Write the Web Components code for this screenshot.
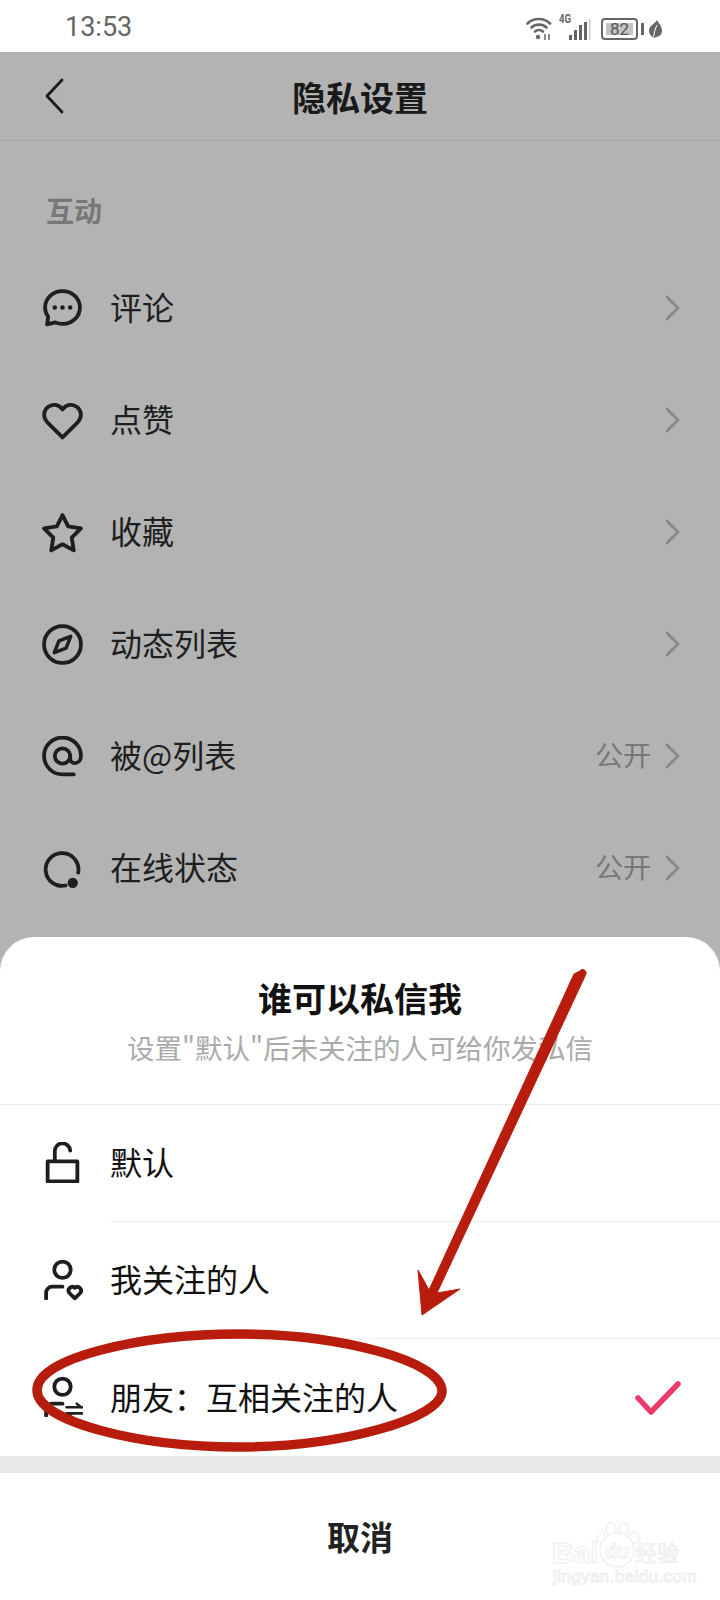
<!DOCTYPE html>
<html lang="zh">
<head>
<meta charset="utf-8">
<title>隐私设置</title>
<style>
html,body{margin:0;padding:0;}
body{width:720px;height:1600px;position:relative;overflow:hidden;background:#b3b3b3;font-family:"Noto Sans CJK SC","Noto Sans",sans-serif;}
svg.ic{width:41px;height:41px;fill:none;stroke:#1e1e1e;stroke-width:3.700;stroke-linecap:round;stroke-linejoin:round;display:block;}
svg.ic .solid{fill:#1e1e1e;stroke:none;}
</style>
</head>
<body>
<status-bar></status-bar>
<nav-bar>隐私设置</nav-bar>
<section-label>互动</section-label>

<setting-row>
  <svg slot="icon" class="ic" viewBox="0 0 40 40"><path d="M20 3C10.500 3 3 10 3 19c0 3.500 1.200 6.500 3 9l-1 7.500 8-2c2.500 1.200 4.500 1.500 7 1.500 9.500 0 17-7 17-16S29.500 3 20 3z"/><circle class="solid" cx="12.500" cy="19" r="2.200"/><circle class="solid" cx="20" cy="19" r="2.200"/><circle class="solid" cx="27.500" cy="19" r="2.200"/></svg>
  评论
</setting-row>
<setting-row>
  <svg slot="icon" class="ic" viewBox="0 0 40 40"><path d="M20 36.500 5 21.500C.8 17 1.300 10.300 5.800 6.800 10.300 3.300 16.500 4.300 20 9.300c3.500-5 9.700-6 14.200-2.500 4.500 3.500 5 10.200.8 14.700z"/></svg>
  点赞
</setting-row>
<setting-row>
  <svg slot="icon" class="ic" viewBox="0 0 40 40"><path d="M20 3l5.500 11 12.500 2-9 9 2 12.500-11-6-11 6 2-12.500-9-9 12.500-2z"/></svg>
  收藏
</setting-row>
<setting-row>
  <svg slot="icon" class="ic" viewBox="0 0 40 40"><circle cx="20" cy="20" r="18"/><path d="M28 12 23.500 23.500 12 28 16.500 16.500z" stroke-width="3.400"/></svg>
  动态列表
</setting-row>
<setting-row value="公开">
  <svg slot="icon" class="ic" viewBox="0 0 40 40"><path d="M31 37.500H20a18 18 0 1 1 18-18c0 4.500-3 7-6 7s-4.500-2.500-4.500-5V19"/><circle cx="20" cy="19.500" r="7.500"/></svg>
  被@列表
</setting-row>
<setting-row value="公开">
  <svg slot="icon" class="ic" viewBox="0 0 40 40"><path d="M23 36.600A16 16 0 1 1 35.300 24"/><circle class="solid" cx="30" cy="34" r="5"/></svg>
  在线状态
</setting-row>

<bottom-sheet heading="谁可以私信我" sub='设置"默认"后未关注的人可给你发私信' cancel="取消">
  <sheet-option>
    <svg slot="icon" class="ic" viewBox="0 0 40 40"><path d="M5.500 19h29v19.500h-29z"/><path d="M12.500 18V9.500a7.500 7.500 0 0 1 15-1.200"/></svg>
    默认
  </sheet-option>
  <sheet-option>
    <svg slot="icon" class="ic" viewBox="0 0 40 40"><circle cx="20" cy="10.500" r="8"/><path d="M4 38.500V33a6 6 0 0 1 6-6h10"/><path d="M32 38.500l-5.300-5.300a3.700 3.700 0 0 1 5.300-5.100 3.700 3.700 0 0 1 5.300 5.100z"/></svg>
    我关注的人
  </sheet-option>
  <sheet-option checked>
    <svg slot="icon" class="ic" viewBox="0 0 40 40"><circle cx="20" cy="10.500" r="8"/><path d="M4 38.500V33a6 6 0 0 1 6-6h10"/><path d="M24 30.500h15M34 27l4 3.500M24 36.500h15M29 40l-4-3.500" stroke-width="2.600"/></svg>
    朋友：互相关注的人
  </sheet-option>
</bottom-sheet>

<red-marks></red-marks>
<baidu-mark></baidu-mark>

<script>
class StatusBar extends HTMLElement{
    constructor(){
        super()
        this.attachShadow({mode:'open'}).innerHTML=`
        <style>
        :host{display:flex;height:52px;background:#fff;align-items:center;justify-content:space-between;padding:0 58px 0 65px;box-sizing:border-box;color:#666;font-family:"Roboto","Noto Sans",sans-serif;}
        .time{font-size:27px;line-height:1;margin-top:3px;}
        .icons{display:flex;align-items:flex-end;position:relative;top:2px;}
        svg{display:block;}
        .g4{font-size:12px;font-weight:700;align-self:flex-start;margin:-3px -4px 0 7px;line-height:12px;width:14px;transform:scaleX(.8);transform-origin:left;}
        .batt{width:37px;height:22px;box-sizing:border-box;border:2px solid #666;border-radius:4px;margin-left:10px;padding:3px;display:flex;}
        .batt span{flex:1;background:#c4c4c4;font-size:17px;line-height:12px;text-align:center;color:#555;}
        .tip{margin:0 0 5px 3px;}
        .leaf{margin:0 0 2px 5px;}
        </style>
        <div class="time">13:53</div>
        <div class="icons">
            <svg width="26" height="24" viewBox="0 0 26 24" fill="none" stroke="#666" stroke-width="2.600" stroke-linecap="round"><path d="M1.500 7.500C7.500 1.500 18 1.500 24 7.500"/><path d="M5.500 11.500c4-3.800 11-3.800 15 0"/><path d="M9 15.500c2.200-1.800 5.800-1.800 8 0"/><circle cx="12" cy="21" r="2.200" fill="#666" stroke="none"/><path d="M19 18.500v5M23 18.500v5" stroke-width="1.500"/></svg>
            <div class="g4">4G</div>
            <svg width="22" height="21" viewBox="0 0 22 21" fill="#666"><rect x="0" y="16" width="3" height="5"/><rect x="5" y="11" width="3" height="10"/><rect x="10" y="6" width="3" height="15"/><rect x="15" y="3" width="3" height="18"/><rect x="20" y="0" width="1.500" height="21" fill="#ccc"/></svg>
            <div class="batt"><span>82</span></div>
            <svg class="tip" width="3" height="12"><rect width="3" height="12" fill="#666"/></svg>
            <svg class="leaf" width="13" height="18" viewBox="0 0 13 18"><path d="M8 0C9.500 3 13 6 13 10.500 13 14.500 10.500 16.500 7.500 17L5 18C2 16.500 0 14 0 10.500 0 6 5.500 4 8 0z" fill="#666"/><path d="M4.500 17.500C5 13 6 9 8 5" fill="none" stroke="#fff" stroke-width="1"/></svg>
        </div>`
    }
}

class NavBar extends HTMLElement{
    constructor(){
        super()
        this.attachShadow({mode:'open'}).innerHTML=`
        <style>
        :host{display:grid;grid-template-columns:1fr auto 1fr;align-items:center;height:89px;box-sizing:border-box;border-bottom:1px solid #a6a6a6;}
        .title{font-size:34px;font-weight:700;color:#1a1a1a;line-height:1;margin-top:2px;}
        svg{display:block;margin-left:45px;}
        </style>
        <svg width="19" height="36" viewBox="0 0 19 36" fill="none" stroke="#1a1a1a" stroke-width="2.800" stroke-linecap="round" stroke-linejoin="round"><path d="M17 2 2 18l15 16"/></svg>
        <div class="title"><slot></slot></div>
        <div></div>`
    }
}

class SectionLabel extends HTMLElement{
    constructor(){
        super()
        this.attachShadow({mode:'open'}).innerHTML=`
        <style>
        :host{display:block;height:111px;box-sizing:border-box;padding:50px 0 0 46px;font-size:28px;font-weight:700;line-height:38px;color:#777;}
        </style>
        <slot></slot>`
    }
}

class SettingRow extends HTMLElement{
    constructor(){
        super()
        const value=this.getAttribute('value')||''
        this.attachShadow({mode:'open'}).innerHTML=`
        <style>
        :host{display:flex;align-items:center;height:112px;padding:0 40px 0 42px;font-size:32px;color:#1f1f1f;}
        .icon{width:41px;height:41px;margin-right:27px;}
        .label{flex:1;line-height:1;padding-bottom:4px;}
        .value{font-size:28px;color:#777;margin-right:14px;padding-bottom:4px;line-height:1;}
        svg{display:block;}
        </style>
        <div class="icon"><slot name="icon"></slot></div>
        <div class="label"><slot></slot></div>
        <div class="value">${value}</div>
        <svg width="15" height="26" viewBox="0 0 15 26" fill="none" stroke="#888" stroke-width="2.800" stroke-linecap="round" stroke-linejoin="round"><path d="M2 2l11 11L2 24"/></svg>`
    }
}

class BottomSheet extends HTMLElement{
    constructor(){
        super()
        this.attachShadow({mode:'open'}).innerHTML=`
        <style>
        :host{position:absolute;left:0;right:0;top:937px;bottom:0;display:flex;flex-direction:column;background:#fff;border-radius:34px 34px 0 0;overflow:hidden;}
        header{height:168px;box-sizing:border-box;border-bottom:1px solid #ececec;display:flex;flex-direction:column;align-items:center;padding-top:41px;}
        h1{margin:0;font-size:34px;font-weight:700;line-height:40px;color:#111;}
        p{margin:10px 0 0;font-size:27.500px;line-height:38px;color:#aaa;}
        .gap{height:17px;background:#e8e8e8;}
        .cancel{flex:1;display:flex;align-items:center;justify-content:center;font-size:33px;font-weight:700;color:#222;padding-bottom:2px;}
        </style>
        <header><h1>${this.getAttribute('heading')}</h1><p>${this.getAttribute('sub')}</p></header>
        <slot></slot>
        <div class="gap"></div>
        <div class="cancel">${this.getAttribute('cancel')}</div>`
    }
}

class SheetOption extends HTMLElement{
    constructor(){
        super()
        const mark=this.hasAttribute('checked')?`<svg width="46" height="34" viewBox="0 0 46 34" fill="none" stroke="#ee3a6a" stroke-width="5.500" stroke-linecap="round" stroke-linejoin="round"><path d="M3 17l13 14L43 3"/></svg>`:''
        this.attachShadow({mode:'open'}).innerHTML=`
        <style>
        :host{display:flex;align-items:stretch;height:117px;padding-left:42px;font-size:32px;color:#111;}
        .icon{width:41px;height:41px;margin:37px 27px 0 0;}
        .body{flex:1;display:flex;align-items:center;justify-content:space-between;padding-right:39px;border-bottom:1px solid #f0f0f0;line-height:1;}
        .text{padding-bottom:4px;}
        :host(:last-of-type) .body{border-bottom:none;}
        svg{display:block;}
        </style>
        <div class="icon"><slot name="icon"></slot></div>
        <div class="body"><div class="text"><slot></slot></div>${mark}</div>`
    }
}

// hand drawn red ellipse and arrow on top of the screenshot
class RedMarks extends HTMLElement{
    constructor(){
        super()
        this.attachShadow({mode:'open'}).innerHTML=`
        <style>
        :host{position:absolute;left:0;top:0;width:720px;height:1600px;pointer-events:none;}
        svg{display:block;}
        </style>
        <svg width="720" height="1600" viewBox="0 0 720 1600">
            <path d="M580 971c2-3 7-1 6 3L437 1293l23-4-38 26-4-45 11 20L574 974z" fill="#b81c0c" stroke="#b81c0c" stroke-width="1" stroke-linejoin="round"/>
            <path d="M240 1334C140 1334 37 1358 37 1390C37 1422 140 1447 238 1447C340 1447 442 1419 442 1391C442 1361 340 1334 240 1334Z" fill="none" stroke="#b81c0c" stroke-width="9.500"/>
        </svg>`
    }
}

class BaiduMark extends HTMLElement{
    constructor(){
        super()
        this.attachShadow({mode:'open'}).innerHTML=`
        <style>
        :host{position:absolute;left:550px;top:1520px;width:135px;height:66px;color:#fff;font-family:"Liberation Sans",sans-serif;-webkit-text-stroke:1px #eeeeee;pointer-events:none;}
        .abs{position:absolute;line-height:1;white-space:nowrap;}
        svg{position:absolute;left:44px;top:2px;}
        </style>
        <svg width="46" height="46" viewBox="0 0 46 46" fill="#fff" stroke="#eeeeee" stroke-width="1.200"><ellipse cx="7" cy="15" rx="4" ry="6"/><ellipse cx="17" cy="7" rx="5" ry="6.500"/><ellipse cx="30" cy="7" rx="5" ry="6.500"/><ellipse cx="40" cy="16" rx="5" ry="6"/><circle cx="23" cy="28" r="17"/></svg>
        <div class="abs" style="left:2px;top:18px;font-size:30px;font-weight:700;">Bai</div>
        <div class="abs" style="left:55px;top:21px;font-size:20px;font-weight:700;">du</div>
        <div class="abs" style="left:85px;top:20px;font-size:22px;font-family:'Noto Sans CJK SC',sans-serif;">经验</div>
        <div class="abs" style="left:3px;top:48px;font-size:17px;letter-spacing:.4px;">jingyan.baidu.com</div>`
    }
}

customElements.define('status-bar',StatusBar)
customElements.define('nav-bar',NavBar)
customElements.define('section-label',SectionLabel)
customElements.define('setting-row',SettingRow)
customElements.define('bottom-sheet',BottomSheet)
customElements.define('sheet-option',SheetOption)
customElements.define('red-marks',RedMarks)
customElements.define('baidu-mark',BaiduMark)
</script>
</body>
</html>
